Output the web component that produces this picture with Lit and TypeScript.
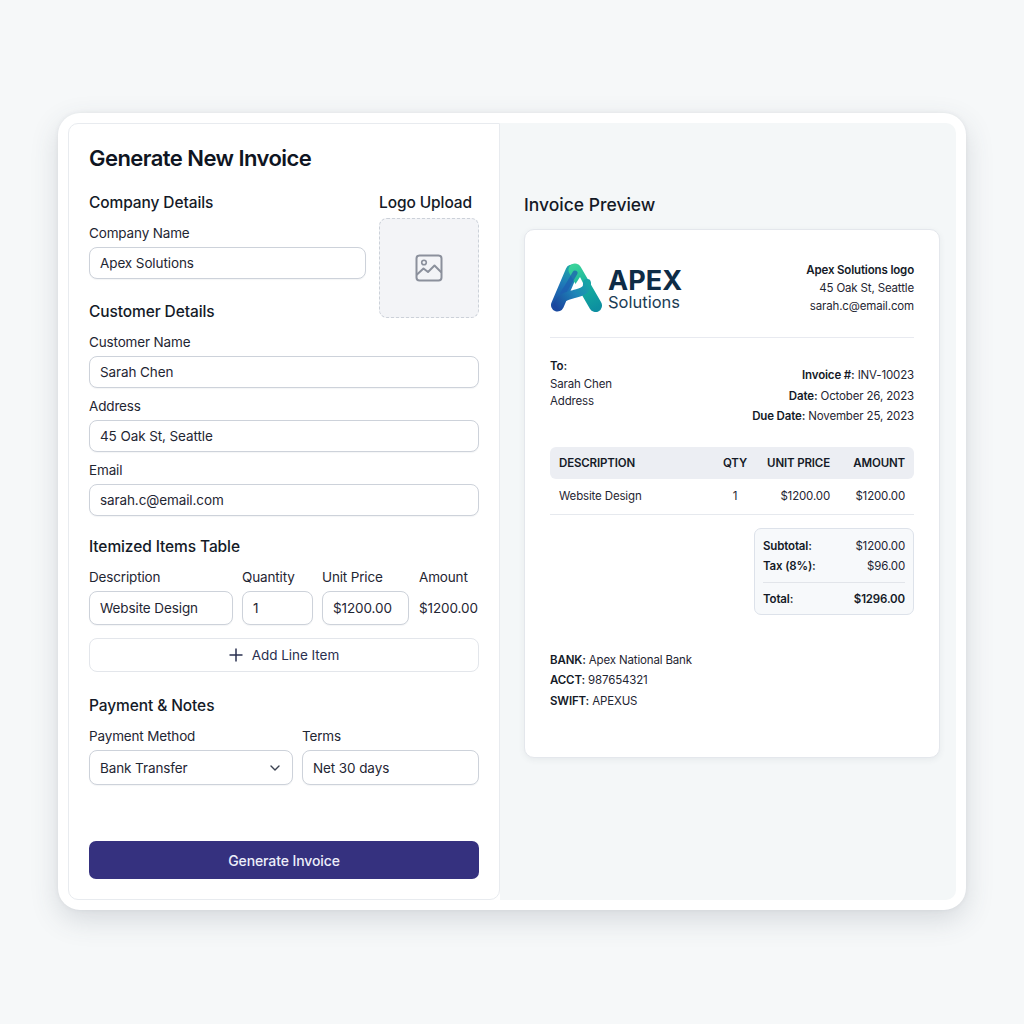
import { LitElement, html, css } from "lit";
import { customElement } from "lit/decorators.js";

@customElement("app-root")
export class AppRoot extends LitElement {
  static styles = css`
    :host { display: block; width: 1024px; height: 1024px; background: #f6f8f9; font-family: Inter, "Liberation Sans", sans-serif; color: #1b2230; overflow: hidden; }
    * { box-sizing: border-box; }
    .page { padding: 113px 58px 0; }
    .frame { width: 908px; height: 797px; padding: 10px; background: #fff; border-radius: 22px; display: flex; box-shadow: 0 10px 28px rgba(60,70,90,.17), 0 0 4px rgba(60,70,90,.08); }
    .left { width: 432px; height: 777px; background: #fff; border: 1px solid #e8ebef; border-radius: 10px 0 10px 10px; padding: 19px 20px 20px; display: flex; flex-direction: column; }
    .right { width: 456px; height: 777px; background: #f4f7f8; border-radius: 0 10px 10px 0; padding: 70px 16px 0 24px; }
    h1 { margin: 0; font-size: 22px; line-height: 30px; font-weight: 600; color: #0f1522; letter-spacing: -.55px; }
    h2 { margin: 0; font-size: 15.5px; line-height: 20px; font-weight: 500; color: #141a27; letter-spacing: -.1px; }
    label { display: block; font-size: 13.5px; line-height: 18px; color: #1f2633; letter-spacing: -.15px; }
    .field { height: 32px; border: 1px solid #cdd2da; border-radius: 8px; background: #fff; padding: 0 10px; display: flex; align-items: center; font-size: 13.5px; letter-spacing: -.1px; color: #1f2633; box-shadow: 0 1px 1px rgba(40,50,70,.05); }
    .top { display: grid; grid-template-columns: 277px 100px; column-gap: 13px; margin-top: 20px; }
    .upload { margin-top: 5px; width: 100px; height: 100px; background: #f3f4f7; border: 1px dashed #ccd1d9; border-radius: 8px; display: flex; align-items: center; justify-content: center; }
    .company { margin-top: 11px; }
    .after { margin-top: 23px; }
    .stack { display: flex; flex-direction: column; gap: 9px; margin-top: 11px; }
    .f .field { margin-top: 5px; }
    .sec { margin-top: 21px; }
    .sec2 { margin-top: 24px; }
    .items { display: grid; grid-template-columns: 144px 71px 87px 60px; column-gap: 9px; margin-top: 11px; align-items: center; }
    .items .field { height: 34px; margin-top: 5px; }
    .amount { padding-left: 1px; }
    .amt { font-size: 13.5px; letter-spacing: -.1px; margin-top: 5px; padding-left: 1px; color: #1f2633; white-space: nowrap; }
    .add { margin-top: 13px; height: 34px; border: 1px solid #e3e6eb; border-radius: 8px; background: #fff; display: flex; align-items: center; justify-content: center; gap: 9px; font-size: 13.5px; letter-spacing: -.05px; color: #2a3050; }
    .pay { display: grid; grid-template-columns: 204px 177px; column-gap: 9px; margin-top: 11px; }
    .pay .field { height: 35px; margin-top: 5px; justify-content: space-between; padding-right: 12px; }
    .submit { margin-top: auto; height: 38px; border-radius: 7px; background: #35317f; color: #eceefa; font-size: 14px; letter-spacing: -.1px; font-weight: 500; display: flex; align-items: center; justify-content: center; }
    .right h2 { font-size: 17.5px; line-height: 24px; font-weight: 500; letter-spacing: 0; }
    .card { margin-top: 12px; width: 416px; height: 529px; background: #fff; border: 1px solid #e4e7ec; border-radius: 10px; padding: 33px 25px 0; box-shadow: 0 2px 6px rgba(60,70,90,.07); font-size: 11.5px; letter-spacing: -.15px; color: #1f2633; }
    .head { display: flex; justify-content: space-between; height: 75px; border-bottom: 1px solid #e8eaf0; }
    .brand { display: flex; align-items: flex-start; gap: 4px; }
    .names { display: flex; flex-direction: column; padding-top: 4px; }
    .apex { font-size: 27px; line-height: 27px; font-weight: 700; color: #0e2c46; letter-spacing: .1px; }
    .sol { font-size: 16.5px; line-height: 17px; letter-spacing: 0; color: #1c3c55; }
    .addr { text-align: right; line-height: 18px; margin-top: -2px; }
    b { font-weight: 600; color: #141a27; }
    .meta { display: flex; justify-content: space-between; margin-top: 20px; }
    .to { line-height: 17.5px; }
    .inv { text-align: right; line-height: 20.5px; margin-top: 7px; }
    .row { display: grid; grid-template-columns: 1fr 40px 75px 75px; align-items: center; padding: 0 9px; text-align: right; }
    .row > :first-child { text-align: left; }
    .row > :nth-child(2) { text-align: center; }
    .th { margin-top: 20px; height: 32px; background: #eceef3; border-radius: 6px; font-weight: 600; color: #141a27; }
    .td { height: 36px; border-bottom: 1px solid #e6e9ee; }
    .totals { margin: 13px 0 0 auto; width: 160px; height: 87px; background: #f7f9fb; border: 1px solid #dde2ea; border-radius: 7px; padding: 7px 8px 0; }
    .tr { display: flex; justify-content: space-between; line-height: 20px; }
    .grand { margin-top: 6px; padding-top: 6px; border-top: 1px solid #e2e5ea; }
    .bank { margin-top: 35px; line-height: 20.5px; }
  `;

  render() {
    return html`<div class="page"><div class="frame">
      <section class="left">
        <h1>Generate New Invoice</h1>
        <div class="top">
          <div>
            <h2>Company Details</h2>
            <div class="f company"><label>Company Name</label><div class="field">Apex Solutions</div></div>
            <h2 class="after">Customer Details</h2>
          </div>
          <div>
            <h2>Logo Upload</h2>
            <div class="upload">
              <svg width="28" height="28" viewBox="0 0 28 28" fill="none" stroke="#8b909c" stroke-width="2" stroke-linejoin="round" stroke-linecap="round">
                <rect x="1.5" y="1.5" width="25" height="25" rx="3"></rect>
                <circle cx="9" cy="8.5" r="2.3" stroke-width="1.6"></circle>
                <path d="M2 20.5 L8.5 14.5 L13 18 L19.5 11.5 L26 18"></path>
              </svg>
            </div>
          </div>
        </div>
        <div class="stack">
          <div class="f"><label>Customer Name</label><div class="field">Sarah Chen</div></div>
          <div class="f"><label>Address</label><div class="field">45 Oak St, Seattle</div></div>
          <div class="f"><label>Email</label><div class="field">sarah.c@email.com</div></div>
        </div>
        <h2 class="sec">Itemized Items Table</h2>
        <div class="items">
          <label>Description</label><label>Quantity</label><label>Unit Price</label><label class="amount">Amount</label>
          <div class="field">Website Design</div><div class="field">1</div><div class="field">$1200.00</div><div class="amt">$1200.00</div>
        </div>
        <div class="add">
          <svg width="14" height="14" viewBox="0 0 14 14" fill="none" stroke="#2a3050" stroke-width="1.5"><path d="M7 .5v13M.5 7h13"></path></svg>
          <span>Add Line Item</span>
        </div>
        <h2 class="sec2">Payment &amp; Notes</h2>
        <div class="pay">
          <label>Payment Method</label><label>Terms</label>
          <div class="field">Bank Transfer
            <svg width="10" height="6" viewBox="0 0 10 6" fill="none" stroke="#3a4150" stroke-width="1.4" stroke-linecap="round" stroke-linejoin="round"><path d="M1 1l4 4 4-4"></path></svg>
          </div>
          <div class="field">Net 30 days</div>
        </div>
        <div class="submit">Generate Invoice</div>
      </section>
      <section class="right">
        <h2>Invoice Preview</h2>
        <div class="card">
          <div class="head">
            <div class="brand">
              <svg width="54" height="50" viewBox="0 0 54 50" fill="none">
                <defs>
                  <linearGradient id="ga" gradientUnits="userSpaceOnUse" x1="24" y1="4" x2="8" y2="46"><stop offset="0" stop-color="#1fa8a8"></stop><stop offset=".45" stop-color="#1f78b8"></stop><stop offset="1" stop-color="#1a4aa0"></stop></linearGradient>
                  <linearGradient id="gb" gradientUnits="userSpaceOnUse" x1="24" y1="2" x2="46" y2="46"><stop offset="0" stop-color="#3ad39a"></stop><stop offset=".55" stop-color="#14ab9e"></stop><stop offset="1" stop-color="#0d8fa0"></stop></linearGradient>
                  <linearGradient id="gc" gradientUnits="userSpaceOnUse" x1="6" y1="44" x2="38" y2="20"><stop offset="0" stop-color="#1a479e"></stop><stop offset=".6" stop-color="#1e86b8"></stop><stop offset="1" stop-color="#16a5a5"></stop></linearGradient>
                </defs>
                <path d="M22 8 L7.5 42" stroke="url(#ga)" stroke-width="13" stroke-linecap="round"></path>
                <path d="M25 7 L45.5 42.5" stroke="url(#gb)" stroke-width="13" stroke-linecap="round"></path>
                <path d="M30 14 L19 31 L35 24 Z" fill="#fff"></path>
                <path d="M25 10 C21 17 17 24 13 30" stroke="#1d5fb0" stroke-width="5" stroke-linecap="round" opacity=".75"></path>
                <path d="M7 43 C8 36 15 33 24 31 C32 29 38 27 37 20" stroke="url(#gc)" stroke-width="8" stroke-linecap="round"></path>
              </svg>
              <div class="names"><span class="apex">APEX</span><span class="sol">Solutions</span></div>
            </div>
            <div class="addr"><b>Apex Solutions logo</b><br>45 Oak St, Seattle<br>sarah.c@email.com</div>
          </div>
          <div class="meta">
            <div class="to"><b>To:</b><br>Sarah Chen<br>Address</div>
            <div class="inv"><b>Invoice #:</b> INV-10023<br><b>Date:</b> October 26, 2023<br><b>Due Date:</b> November 25, 2023</div>
          </div>
          <div class="row th"><span>DESCRIPTION</span><span>QTY</span><span>UNIT PRICE</span><span>AMOUNT</span></div>
          <div class="row td"><span>Website Design</span><span>1</span><span>$1200.00</span><span>$1200.00</span></div>
          <div class="totals">
            <div class="tr"><b>Subtotal:</b><span>$1200.00</span></div>
            <div class="tr"><b>Tax (8%):</b><span>$96.00</span></div>
            <div class="tr grand"><b>Total:</b><b>$1296.00</b></div>
          </div>
          <div class="bank"><b>BANK:</b> Apex National Bank<br><b>ACCT:</b> 987654321<br><b>SWIFT:</b> APEXUS</div>
        </div>
      </section>
    </div></div>`;
  }
}
